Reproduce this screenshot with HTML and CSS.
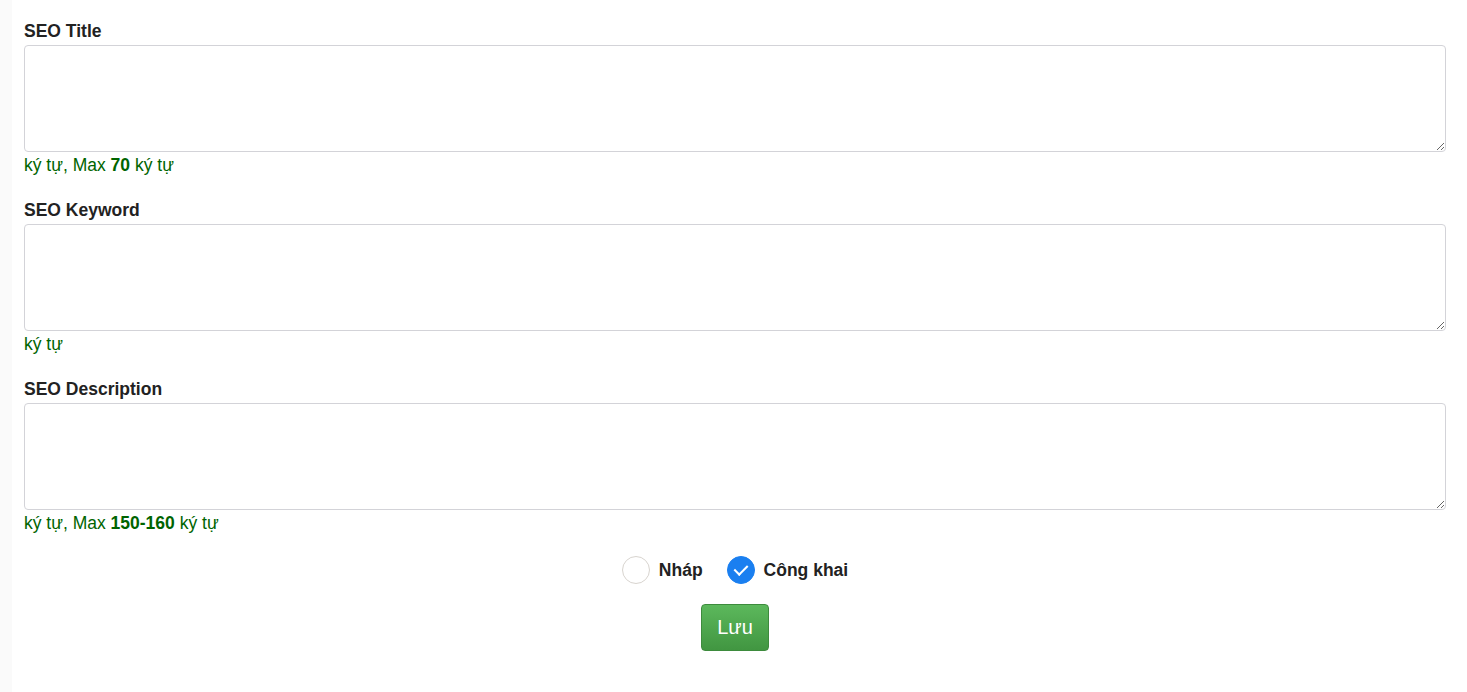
FILE: index.html
```html
<!DOCTYPE html>
<html lang="vi">
<head>
  <meta charset="UTF-8" />
  <meta name="viewport" content="width=device-width, initial-scale=1.0"/>
  <title>SEO</title>
  <link rel="stylesheet" href="styles.css">
</head>
<body>
  <div class="panel">
    <form id="seoForm">
      <div class="fields">
        <div class="field">
          <label for="seo_title">SEO Title</label>
          <textarea id="seo_title" name="seo_title"></textarea>
          <div class="count">ký tự, Max <b>70</b> ký tự</div>
        </div>

        <div class="field">
          <label for="seo_keyword">SEO Keyword</label>
          <textarea id="seo_keyword" name="seo_keyword"></textarea>
          <div class="count">ký tự</div>
        </div>

        <div class="field">
          <label for="seo_description">SEO Description</label>
          <textarea id="seo_description" name="seo_description"></textarea>
          <div class="count">ký tự, Max <b>150-160</b> ký tự</div>
        </div>
      </div>

      <div class="status">
        <label class="radio">
          <input type="radio" name="status" value="0" />
          <span class="dot"></span>
          Nháp
        </label>
        <label class="radio">
          <input type="radio" name="status" value="1" checked />
          <span class="dot"></span>
          Công khai
        </label>
      </div>

      <div class="buttons">
        <button type="submit">Lưu</button>
      </div>
    </form>
  </div>
</body>
</html>
```

FILE: styles.css
```css
body {
  font-family: "Liberation Sans", Arial, sans-serif;
  background: #fafafa;
  margin: 0;
  padding: 0;
}
.panel {
  margin-left: 12px;
  background: #fff;
  padding: 21px 21px 40px 12px;
  min-height: 692px;
  box-sizing: border-box;
}
.field {
  margin-bottom: 24px;
}
.field:last-child {
  margin-bottom: 0;
}
.field label {
  display: block;
  font-weight: bold;
  font-size: 17.5px;
  line-height: 20px;
  color: #222;
  margin-bottom: 4px;
}
textarea {
  display: block;
  width: 100%;
  height: 107px;
  box-sizing: border-box;
  border: 1px solid #d3d3d8;
  border-radius: 4px;
  padding: 6px 12px;
  font-size: 16px;
  font-family: inherit;
  resize: vertical;
}
.count {
  margin-top: 3px;
  font-size: 17.5px;
  color: #006400;
  line-height: 21px;
}
.count b {
  color: #006400;
}
.status {
  display: flex;
  justify-content: center;
  gap: 24px;
  margin-top: 22px;
}
.radio {
  display: flex;
  align-items: center;
  gap: 9px;
  font-weight: bold;
  font-size: 17.5px;
  color: #222;
  cursor: pointer;
}
.radio input {
  display: none;
}
.dot {
  width: 28px;
  height: 28px;
  border: 1px solid #d8d4cf;
  border-radius: 50%;
  box-sizing: border-box;
  position: relative;
}
.radio input:checked + .dot {
  background: #1a7ff0;
  border-color: #1a7ff0;
}
.radio input:checked + .dot::after {
  content: "";
  position: absolute;
  left: 9px;
  top: 5px;
  width: 6px;
  height: 11px;
  border: solid #fff;
  border-width: 0 2px 2px 0;
  transform: rotate(45deg);
}
.buttons {
  display: flex;
  justify-content: center;
  margin-top: 20px;
}
button {
  width: 68px;
  height: 47px;
  border: 1px solid #3d8b3d;
  border-radius: 4px;
  background: linear-gradient(#5cb85c, #419641);
  color: #fff;
  font-size: 20px;
  font-family: inherit;
  cursor: pointer;
}
button:hover {
  background: #449d44;
}
```
